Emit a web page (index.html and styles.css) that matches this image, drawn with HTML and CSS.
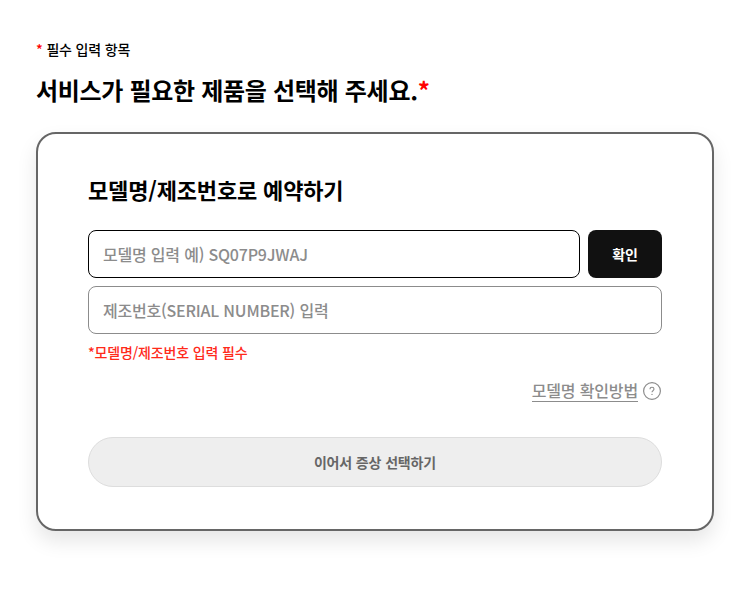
FILE: index.html
```html
<!DOCTYPE html>
<html lang="ko">
<head>
    <meta charset="UTF-8">
    <meta name="viewport" content="width=device-width, initial-scale=1.0">
    <title>서비스 예약</title>
    <link rel="stylesheet" href="styles.css">
</head>
<body>

<div class="page">
    <p class="required-note"><span class="star">*</span> 필수 입력 항목</p>
    <h2 class="page-title">서비스가 필요한 제품을 선택해 주세요.<span class="star">*</span></h2>

    <div class="card">
        <h3 class="card-title">모델명/제조번호로 예약하기</h3>

        <div class="model-row">
            <input type="text" class="field field-active" placeholder="모델명 입력 예) SQ07P9JWAJ">
            <button type="button" class="confirm-btn">확인</button>
        </div>
        <input type="text" class="field" placeholder="제조번호(SERIAL NUMBER) 입력">
        <p class="error-msg">*모델명/제조번호 입력 필수</p>

        <div class="help-row">
            <a href="#" class="help-link">모델명 확인방법</a>
            <svg class="help-icon" width="18" height="18" viewBox="0 0 18 18" aria-hidden="true">
                <circle cx="9" cy="9" r="8.4" fill="none" stroke="#8c8c8c" stroke-width="1.2"/>
                <path d="M7 7.2c0-1.2.9-1.9 2-1.9s2 .7 2 1.8c0 1.6-2 1.6-2 3.2" fill="none" stroke="#8c8c8c" stroke-width="1.1"/>
                <circle cx="9" cy="12.4" r=".7" fill="#8c8c8c"/>
            </svg>
        </div>

        <button type="button" class="next-btn">이어서 증상 선택하기</button>
    </div>
</div>

</body>
</html>
```

FILE: styles.css
```css
body {
    font-family: "Noto Sans CJK KR", "Noto Sans", sans-serif;
    margin: 0;
    padding: 0;
    background-color: white;
    color: #000;
    letter-spacing: -0.01em;
}
.page {
    padding: 39px 19px 58px 36px;
}
.star {
    color: #f00;
}
.required-note {
    margin: 0;
    font-size: 14px;
    line-height: 20px;
    font-weight: 500;
}
.page-title {
    margin: 15px 0 26px 0;
    font-size: 24px;
    line-height: 32px;
    font-weight: 700;
    letter-spacing: -0.3px;
}
.card {
    box-sizing: border-box;
    height: 399px;
    padding: 38px 50px 0 50px;
    background-color: white;
    border: 2px solid #666;
    border-radius: 20px;
    box-shadow: 0 10px 20px rgba(0, 0, 0, 0.1);
}
.card-title {
    margin: 0 0 24px 0;
    font-size: 22px;
    line-height: 34px;
    font-weight: 700;
}
.model-row {
    display: flex;
    gap: 8px;
    margin-bottom: 8px;
}
.field {
    display: block;
    box-sizing: border-box;
    width: 100%;
    height: 48px;
    padding: 0 14px;
    font-family: inherit;
    font-size: 16px;
    font-weight: 500;
    letter-spacing: -0.2px;
    background-color: white;
    border: 1px solid #8c8c8c;
    border-radius: 8px;
    outline: none;
}
.field::placeholder {
    color: #8c8c8c;
    opacity: 1;
}
.field-active {
    flex: 1;
    border-color: #000;
}
.confirm-btn {
    flex: none;
    width: 74px;
    height: 48px;
    padding: 0;
    font-family: inherit;
    font-size: 14px;
    font-weight: 700;
    letter-spacing: -0.01em;
    color: white;
    background-color: #111;
    border: none;
    border-radius: 8px;
}
.error-msg {
    margin: 8px 0 0 0;
    font-size: 14px;
    line-height: 20px;
    font-weight: 500;
    color: #ff2a1a;
}
.help-row {
    display: flex;
    justify-content: flex-end;
    align-items: center;
    gap: 5px;
    margin-top: 17px;
    padding-right: 1px;
}
.help-link {
    font-size: 16px;
    line-height: 22px;
    font-weight: 500;
    color: #8c8c8c;
    text-decoration: none;
    border-bottom: 1px solid #8c8c8c;
}
.help-icon {
    flex: none;
}
.next-btn {
    display: block;
    box-sizing: border-box;
    width: 100%;
    height: 50px;
    margin-top: 35px;
    font-family: inherit;
    font-size: 14px;
    font-weight: 700;
    letter-spacing: -0.01em;
    color: #666;
    background-color: #eee;
    border: 1px solid #ddd;
    border-radius: 25px;
}
```
